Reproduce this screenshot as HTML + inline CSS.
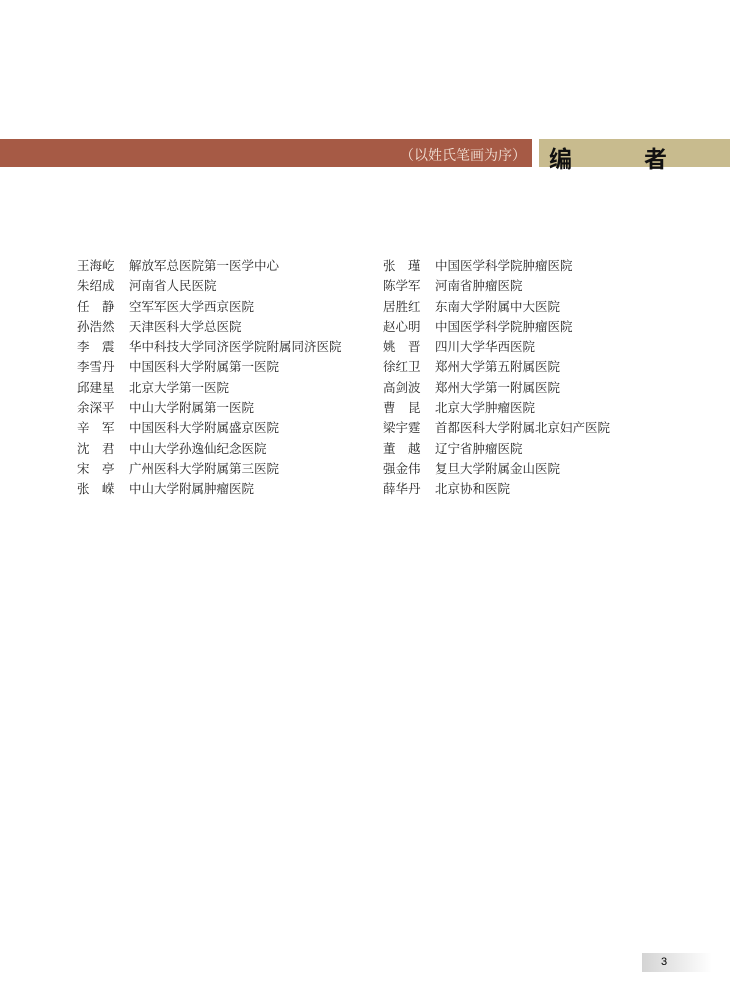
<!DOCTYPE html>
<html><head><meta charset="utf-8"><style>
body{margin:0;width:730px;height:991px;background:#fff;position:relative;overflow:hidden;font-family:"Liberation Serif","Noto Serif CJK SC",serif;}
.red{position:absolute;left:0;top:139px;width:532px;height:28px;background:#a65a45;}
.red span{position:absolute;right:6px;top:6px;color:#f3e3d8;font-size:14px;}
.tan{position:absolute;left:539px;top:139px;width:191px;height:28px;background:#c8bb8e;}
.tan span{position:absolute;top:1px;font-family:"Liberation Sans","Noto Sans CJK SC",sans-serif;font-size:23px;color:#111;font-weight:bold;}
.row{position:absolute;font-size:12.5px;color:#222;white-space:nowrap;line-height:16px;}
.row div{height:20.3px;}
.n{display:inline-block;width:52px;}
.pg{position:absolute;left:642px;top:953px;width:70px;height:19px;background:linear-gradient(to right,#d4d4d4,#fff);font-family:"Liberation Sans",sans-serif;font-size:11px;}
.pg span{position:absolute;left:19px;top:3px;}
</style></head><body>
<div class="red"><span>（以姓氏笔画为序）</span></div>
<div class="tan"><span style="left:10px">编</span><span style="left:105px">者</span></div>
<div class="row" style="left:77px;top:258px">
<div><span class="n">王海屹</span>解放军总医院第一医学中心</div>
<div><span class="n">朱绍成</span>河南省人民医院</div>
<div><span class="n">任　静</span>空军军医大学西京医院</div>
<div><span class="n">孙浩然</span>天津医科大学总医院</div>
<div><span class="n">李　震</span>华中科技大学同济医学院附属同济医院</div>
<div><span class="n">李雪丹</span>中国医科大学附属第一医院</div>
<div><span class="n">邱建星</span>北京大学第一医院</div>
<div><span class="n">余深平</span>中山大学附属第一医院</div>
<div><span class="n">辛　军</span>中国医科大学附属盛京医院</div>
<div><span class="n">沈　君</span>中山大学孙逸仙纪念医院</div>
<div><span class="n">宋　亭</span>广州医科大学附属第三医院</div>
<div><span class="n">张　嵘</span>中山大学附属肿瘤医院</div>
</div>
<div class="row" style="left:383px;top:258px">
<div><span class="n">张　瑾</span>中国医学科学院肿瘤医院</div>
<div><span class="n">陈学军</span>河南省肿瘤医院</div>
<div><span class="n">居胜红</span>东南大学附属中大医院</div>
<div><span class="n">赵心明</span>中国医学科学院肿瘤医院</div>
<div><span class="n">姚　晋</span>四川大学华西医院</div>
<div><span class="n">徐红卫</span>郑州大学第五附属医院</div>
<div><span class="n">高剑波</span>郑州大学第一附属医院</div>
<div><span class="n">曹　昆</span>北京大学肿瘤医院</div>
<div><span class="n">梁宇霆</span>首都医科大学附属北京妇产医院</div>
<div><span class="n">董　越</span>辽宁省肿瘤医院</div>
<div><span class="n">强金伟</span>复旦大学附属金山医院</div>
<div><span class="n">薛华丹</span>北京协和医院</div>
</div>
<div class="pg"><span>3</span></div>
</body></html>
